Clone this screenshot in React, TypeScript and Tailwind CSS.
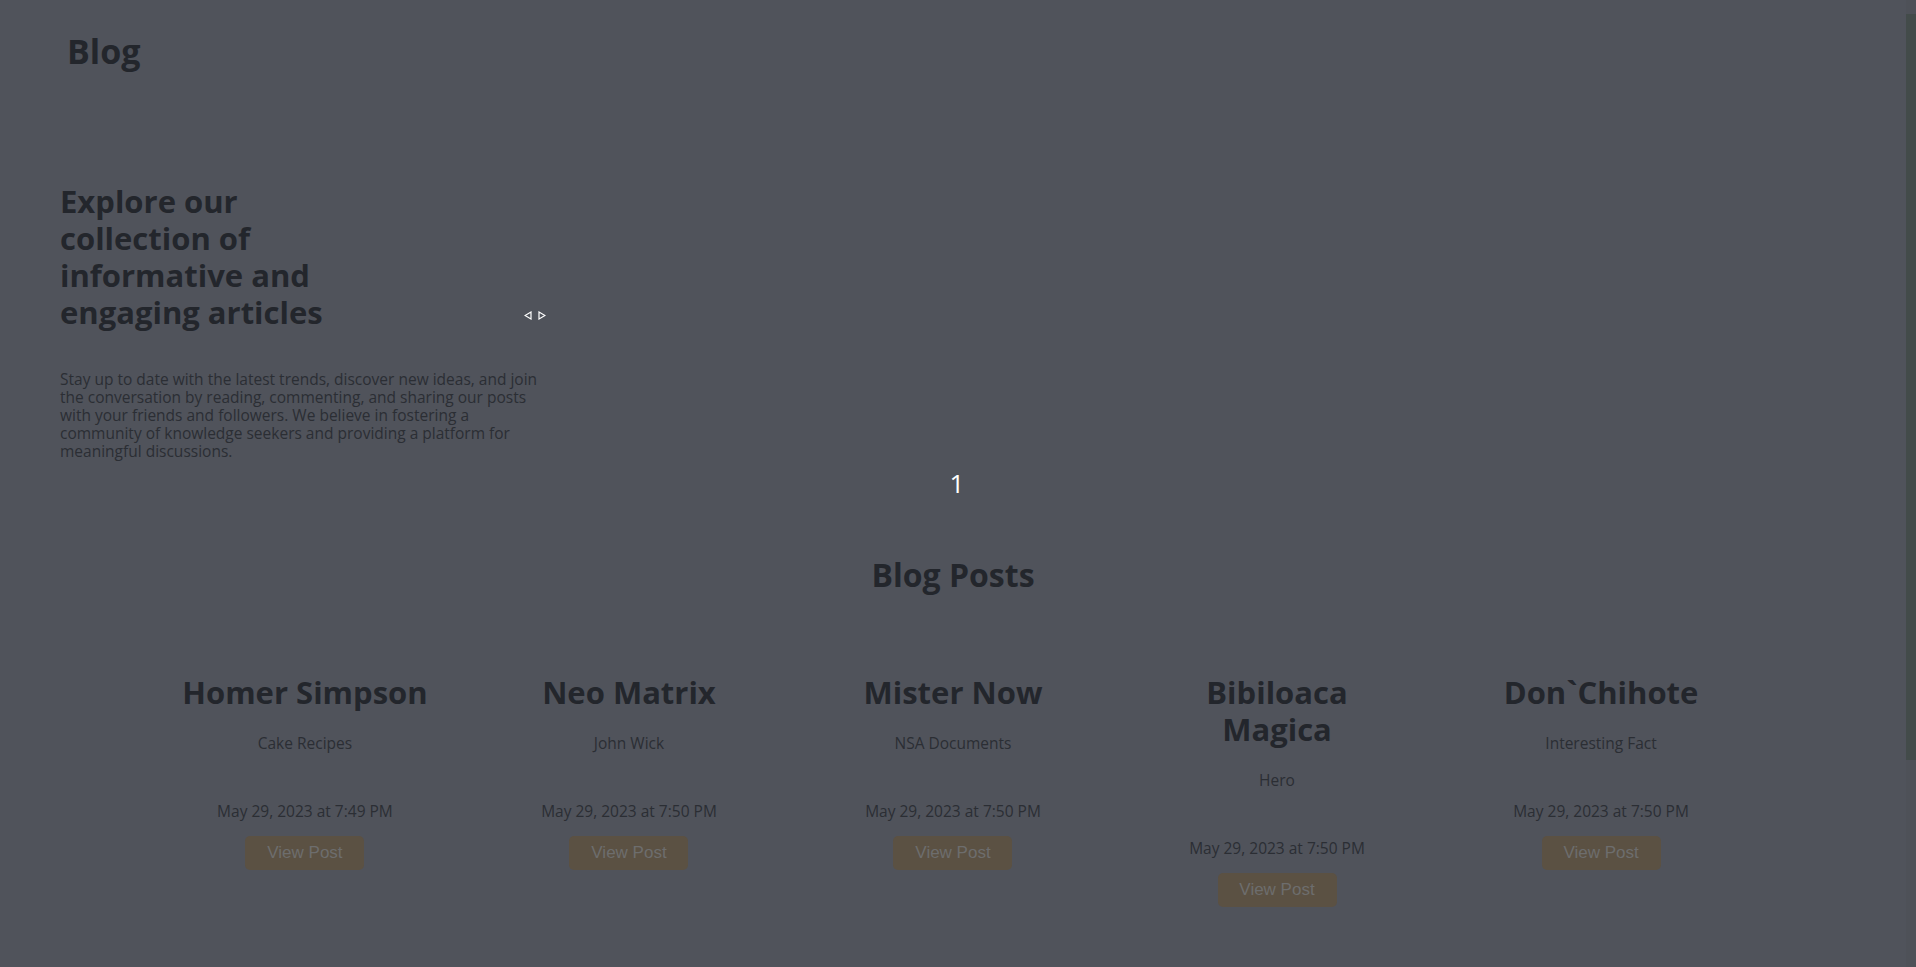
/*
  Blog landing page — dimmed (modal backdrop state).

  Layout:
    Header  — "Blog" wordmark
    Hero    — heading + intro copy, carousel arrows, slide counter
    Posts   — five-column grid of post cards
*/

const posts = [
  { title: "Homer Simpson", subtitle: "Cake Recipes", date: "May 29, 2023 at 7:49 PM" },
  { title: "Neo Matrix", subtitle: "John Wick", date: "May 29, 2023 at 7:50 PM" },
  { title: "Mister Now", subtitle: "NSA Documents", date: "May 29, 2023 at 7:50 PM" },
  { title: "Bibiloaca Magica", subtitle: "Hero", date: "May 29, 2023 at 7:50 PM" },
  { title: "Don`Chihote", subtitle: "Interesting Fact", date: "May 29, 2023 at 7:50 PM" },
];

function PostCard({ title, subtitle, date }: { title: string; subtitle: string; date: string }) {
  return (
    <div className="flex flex-col items-center text-center">
      <h3 className="max-w-[246px] text-[31px] leading-[37px] font-bold text-[#23262c]">{title}</h3>
      <p className="mt-[23px] text-[15.5px] leading-[18px] text-[#2b2e34]">{subtitle}</p>
      <p className="mt-[50px] text-[15.5px] leading-[18px] text-[#2b2e34]">{date}</p>
      <button
        className="mt-[16px] h-[34px] w-[119px] rounded-[5px] bg-[#5b5143] text-[17px] text-[#6d6d6d]"
        style={{ fontFamily: '"Liberation Sans", Arial, sans-serif' }}
      >
        View Post
      </button>
    </div>
  );
}

export default function App() {
  return (
    <div
      className="flex h-screen w-full overflow-hidden bg-[#50535b]"
      style={{ fontFamily: '"Open Sans", "Noto Sans", sans-serif' }}
    >
      <main className="min-w-0 flex-1">
        {/* ── Header ─────────────────────────────────────── */}
        <header className="pl-[67px] pt-[32px]">
          <span className="text-[34px] leading-[39px] font-bold text-[#23262c]">Blog</span>
        </header>

        {/* ── Hero ───────────────────────────────────────── */}
        <section className="pl-[60px] pt-[112px]">
          <div className="flex items-end">
            <h1 className="w-[300px] text-[31px] leading-[37px] font-bold text-[#23262c]">
              Explore our collection of informative and engaging articles
            </h1>
            {/* carousel arrows */}
            <div className="mb-[11px] ml-[164px] flex gap-[6px]">
              <svg width="8" height="9" viewBox="0 0 8 9">
                <path d="M7 1 L1 4.5 L7 8 Z" fill="none" stroke="white" strokeWidth="1.2" />
              </svg>
              <svg width="8" height="9" viewBox="0 0 8 9">
                <path d="M1 1 L7 4.5 L1 8 Z" fill="none" stroke="white" strokeWidth="1.2" />
              </svg>
            </div>
          </div>
          <p className="mt-[39px] w-[482px] text-[15.5px] leading-[18px] text-[#2b2e34]">
            Stay up to date with the latest trends, discover new ideas, and join the conversation by
            reading, commenting, and sharing our posts with your friends and followers. We believe in
            fostering a community of knowledge seekers and providing a platform for meaningful
            discussions.
          </p>
        </section>

        {/* slide counter */}
        <div className="mt-[8px] text-center text-[26px] leading-[30px] text-white">
          <span className="pl-[8px]">1</span>
        </div>

        {/* ── Blog Posts ─────────────────────────────────── */}
        <section className="mt-[58px]">
          <h2 className="text-center text-[32px] leading-[37px] font-bold text-[#23262c]">Blog Posts</h2>
          <div className="mx-auto mt-[81px] grid w-[85%] grid-cols-5">
            {posts.map((p) => (
              <PostCard key={p.title} {...p} />
            ))}
          </div>
        </section>
      </main>

      {/* scrollbar */}
      <div className="flex w-[10px] shrink-0 flex-col bg-[#4e5158] pt-[14px]">
        <div className="h-[746px] bg-[#434b4a]" />
      </div>
    </div>
  );
}
